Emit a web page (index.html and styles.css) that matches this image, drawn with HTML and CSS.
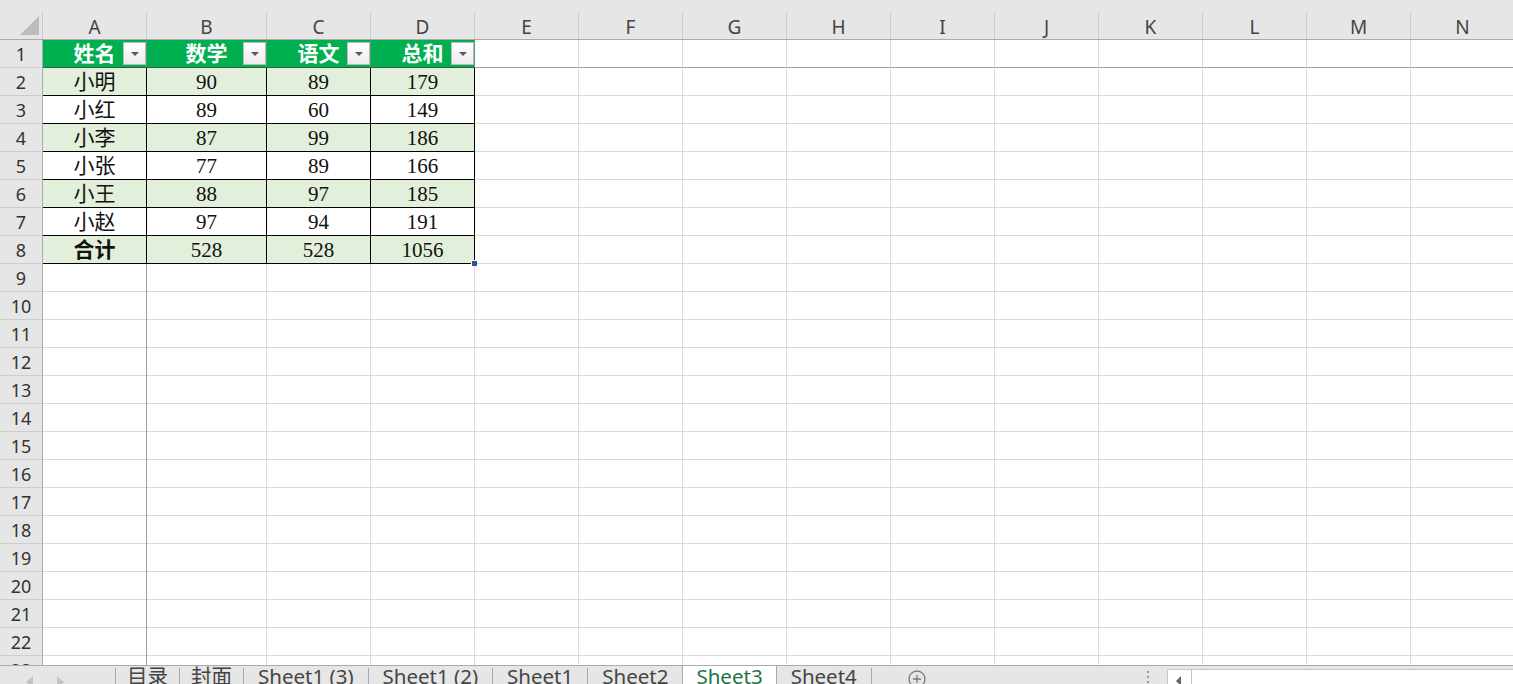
FILE: index.html
```html
<!DOCTYPE html>
<html lang="zh-CN">
  <head>
    <meta charset="UTF-8" />
    <meta name="viewport" content="width=device-width, initial-scale=1.0" />
    <title>Sheet3</title>
    <link rel="stylesheet" href="styles.css">
  </head>
  <body>
    <div class="app">
      <!-- column letters -->
      <div class="col-heads">
        <div class="corner">
          <svg width="43" height="27" viewBox="0 0 43 27"><polygon points="20,23 39,23 39,4" fill="#bdbdbd" /></svg>
        </div>
        <div class="col-h">A</div>
        <div class="col-h wide">B</div>
        <div class="col-h">C</div>
        <div class="col-h">D</div>
        <div class="col-h">E</div>
        <div class="col-h">F</div>
        <div class="col-h">G</div>
        <div class="col-h">H</div>
        <div class="col-h">I</div>
        <div class="col-h">J</div>
        <div class="col-h">K</div>
        <div class="col-h">L</div>
        <div class="col-h">M</div>
        <div class="col-h">N</div>
      </div>

      <div class="sheet">
        <div class="row-heads">
          <div class="rh">1</div><div class="rh">2</div><div class="rh">3</div><div class="rh">4</div>
          <div class="rh">5</div><div class="rh">6</div><div class="rh">7</div><div class="rh">8</div>
          <div class="rh">9</div><div class="rh">10</div><div class="rh">11</div><div class="rh">12</div>
          <div class="rh">13</div><div class="rh">14</div><div class="rh">15</div><div class="rh">16</div>
          <div class="rh">17</div><div class="rh">18</div><div class="rh">19</div><div class="rh">20</div>
          <div class="rh">21</div><div class="rh">22</div><div class="rh">23</div>
        </div>

        <div class="cells">
          <div class="col frozen">
            <div class="cell head">姓名<span class="filter"></span></div>
            <div class="cell band">小明</div>
            <div class="cell">小红</div>
            <div class="cell band">小李</div>
            <div class="cell">小张</div>
            <div class="cell band">小王</div>
            <div class="cell">小赵</div>
            <div class="cell band total">合计</div>
          </div>
          <div class="col wide">
            <div class="cell head">数学<span class="filter"></span></div>
            <div class="cell band">90</div>
            <div class="cell">89</div>
            <div class="cell band">87</div>
            <div class="cell">77</div>
            <div class="cell band">88</div>
            <div class="cell">97</div>
            <div class="cell band">528</div>
          </div>
          <div class="col">
            <div class="cell head">语文<span class="filter"></span></div>
            <div class="cell band">89</div>
            <div class="cell">60</div>
            <div class="cell band">99</div>
            <div class="cell">89</div>
            <div class="cell band">97</div>
            <div class="cell">94</div>
            <div class="cell band">528</div>
          </div>
          <div class="col">
            <div class="cell head">总和<span class="filter"></span></div>
            <div class="cell band">179</div>
            <div class="cell">149</div>
            <div class="cell band">186</div>
            <div class="cell">166</div>
            <div class="cell band">185</div>
            <div class="cell">191</div>
            <div class="cell band">1056<span class="handle"></span></div>
          </div>
          <div class="col"></div>
          <div class="col"></div>
          <div class="col"></div>
          <div class="col"></div>
          <div class="col"></div>
          <div class="col"></div>
          <div class="col"></div>
          <div class="col"></div>
          <div class="col"></div>
          <div class="col"></div>
        </div>
      </div>

      <!-- sheet tabs + horizontal scroll -->
      <div class="tabbar">
        <div class="sheet-tabs">
          <div class="nav">
            <span class="arrow left"></span>
            <span class="arrow right"></span>
          </div>
          <div class="tab cjk">目录</div>
          <div class="tab cjk">封面</div>
          <div class="tab">Sheet1 (3)</div>
          <div class="tab">Sheet1 (2)</div>
          <div class="tab">Sheet1</div>
          <div class="tab">Sheet2</div>
          <div class="tab active">Sheet3</div>
          <div class="tab">Sheet4</div>
          <div class="add-sheet">
            <svg width="18" height="18" viewBox="0 0 18 18">
              <circle cx="9" cy="9" r="8" fill="none" stroke="#7a7a7a" stroke-width="1.3" />
              <path d="M9 5v8M5 9h8" stroke="#7a7a7a" stroke-width="1.3" />
            </svg>
          </div>
        </div>
        <div class="splitter"><i></i><i></i><i></i></div>
        <div class="hscroll">
          <div class="scroll-btn"><span class="arrow-dark"></span></div>
          <div class="track"></div>
        </div>
      </div>
    </div>
  </body>
</html>
```

FILE: styles.css
```css
body {
  margin: 0;
  background: #fff;
  overflow: hidden;
  font-family: "Noto Sans", "Noto Sans CJK SC", sans-serif;
}

.app {
  width: 1513px;
  height: 684px;
  display: flex;
  flex-direction: column;
  overflow: hidden;
}

/* column letters */
.col-heads {
  flex: none;
  display: flex;
  height: 40px;
  padding-top: 12px;
  box-sizing: border-box;
  background: #e6e6e6;
  border-bottom: 1px solid #ababab;
}

.corner {
  flex: none;
  width: 43px;
  box-sizing: border-box;
  border-right: 1px solid #c8c8c8;
}

.corner svg {
  display: block;
}

.col-h {
  flex: none;
  width: 104px;
  box-sizing: border-box;
  border-right: 1px solid #cdcdcd;
  text-align: center;
  font-size: 19px;
  line-height: 30px;
  color: #444;
}

.col-h.wide {
  width: 120px;
}

/* grid */
.sheet {
  flex: 1;
  display: flex;
  overflow: hidden;
}

.row-heads {
  flex: none;
  width: 43px;
  box-sizing: border-box;
  background: #e6e6e6;
  border-right: 1px solid #ababab;
}

.rh {
  height: 28px;
  box-sizing: border-box;
  border-bottom: 1px solid #cdcdcd;
  text-align: center;
  font-size: 18px;
  line-height: 29px;
  color: #333;
}

.cells {
  flex: 1;
  display: flex;
  background:
    linear-gradient(#9e9e9e, #9e9e9e) 0 27px / 100% 1px no-repeat,
    repeating-linear-gradient(to bottom, transparent 0 27px, #dadada 27px 28px);
}

.col {
  flex: none;
  width: 104px;
  box-sizing: border-box;
  border-right: 1px solid #dadada;
}

.col.wide {
  width: 120px;
}

.col.frozen {
  border-right-color: #9e9e9e;
}

.cell {
  position: relative;
  height: 28px;
  box-sizing: border-box;
  margin-right: -1px;
  border-right: 1px solid #000;
  border-bottom: 1px solid #000;
  text-align: center;
  font-family: "Liberation Serif", "Noto Sans CJK SC", serif;
  font-size: 21px;
  line-height: 29px;
  color: #111;
}

.cell.head {
  background: #00b050;
  color: #fff;
  font-weight: bold;
  border-right-color: #4f9f6a;
  border-bottom-color: #2d5f3c;
}

.cell.band {
  background: #e2efda;
}

.cell.total {
  font-weight: bold;
}

.filter {
  position: absolute;
  top: 2px;
  right: 0;
  width: 23px;
  height: 23px;
  box-sizing: border-box;
  border: 1px solid #b9b9b9;
  background: linear-gradient(#ffffff, #ececec);
}

.filter::after {
  content: "";
  position: absolute;
  left: 7px;
  top: 9px;
  border-left: 4px solid transparent;
  border-right: 4px solid transparent;
  border-top: 4px solid #5a5a5a;
}

.handle {
  position: absolute;
  right: -3px;
  bottom: -3px;
  width: 5px;
  height: 5px;
  background: #2f5597;
  border: 1px solid #fff;
  border-right: none;
  border-bottom: none;
}

/* tab bar */
.tabbar {
  flex: none;
  display: flex;
  height: 18px;
  background: #e6e6e6;
  border-top: 1px solid #ababab;
  overflow: hidden;
  font-size: 20.5px;
  color: #444;
}

.sheet-tabs {
  flex: none;
  display: flex;
  width: 1140px;
}

.nav {
  flex: none;
  display: flex;
  gap: 24px;
  width: 116px;
  box-sizing: border-box;
  padding: 8px 0 0 26px;
  border-right: 1px solid #a8a8a8;
  margin-top: 2px;
}

.arrow {
  width: 0;
  height: 0;
  border-top: 6px solid transparent;
  border-bottom: 6px solid transparent;
}

.arrow.left {
  border-right: 7px solid #c4c4c4;
}

.arrow.right {
  border-left: 7px solid #c4c4c4;
}

.tab {
  flex: none;
  margin-top: 2px;
  padding: 0 14px;
  border-right: 1px solid #a8a8a8;
  line-height: 17px;
  white-space: nowrap;
}

.tab.cjk {
  padding: 0 11px;
}

.tab.active {
  margin-top: -1px;
  padding: 3px 13px 0;
  background: #fff;
  color: #217346;
  border-left: 1px solid #a8a8a8;
  margin-left: -1px;
}

.add-sheet {
  flex: none;
  margin: 4px 0 0 36px;
}

.add-sheet svg {
  display: block;
}

.splitter {
  flex: none;
  width: 27px;
  box-sizing: border-box;
  display: flex;
  flex-direction: column;
  gap: 3px;
  padding: 5px 0 0 7px;
}

.splitter i {
  width: 2px;
  height: 2px;
  background: #9a9a9a;
}

.hscroll {
  flex: 1;
  display: flex;
  margin-top: 3px;
  background: #fff;
  border-top: 1px solid #c6c6c6;
  border-left: 1px solid #c6c6c6;
}

.scroll-btn {
  flex: none;
  width: 24px;
  border-right: 1px solid #c6c6c6;
  padding: 6px 0 0 8px;
  box-sizing: border-box;
}

.arrow-dark {
  display: block;
  width: 0;
  height: 0;
  border-top: 5px solid transparent;
  border-bottom: 5px solid transparent;
  border-right: 5px solid #666;
}

.track {
  flex: 1;
}
```
